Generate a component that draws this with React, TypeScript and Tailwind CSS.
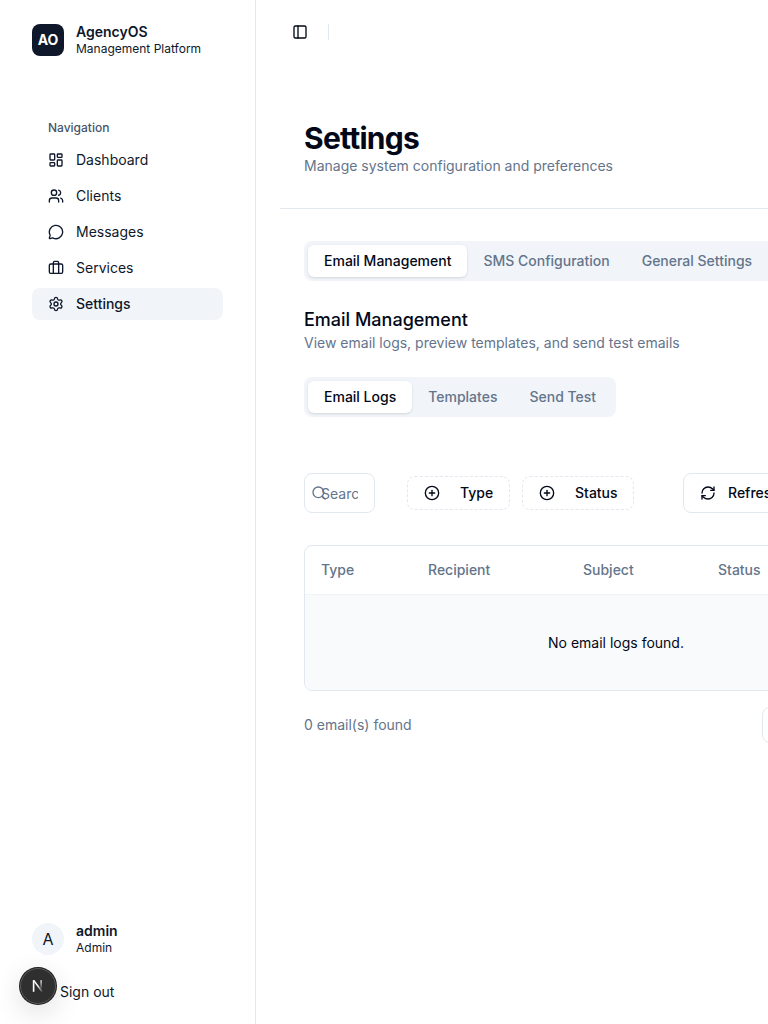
import React from "react";
import {
  Briefcase,
  CirclePlus,
  LayoutDashboard,
  LogOut,
  MessageCircle,
  PanelLeft,
  RefreshCw,
  Search,
  Settings,
  Users,
} from "lucide-react";

const navItems = [
  { label: "Dashboard", icon: LayoutDashboard },
  { label: "Clients", icon: Users },
  { label: "Messages", icon: MessageCircle },
  { label: "Services", icon: Briefcase },
  { label: "Settings", icon: Settings, active: true },
];

function Sidebar() {
  return (
    <aside className="flex h-full w-[256px] shrink-0 flex-col border-r border-[#e2e8f0] bg-white text-[#0f172a]">
      <div className="flex items-center gap-3 px-8 pt-6">
        <div className="flex h-8 w-8 items-center justify-center rounded-lg bg-[#0f172a] text-sm font-bold text-white">AO</div>
        <div className="flex h-8 flex-col">
          <span className="text-sm leading-4 font-semibold">AgencyOS</span>
          <span className="mt-px text-xs leading-4">Management Platform</span>
        </div>
      </div>
      <nav className="mt-[56px] pl-8 pr-8">
        <div className="flex h-8 items-center px-4 text-xs font-medium text-[#475569]">Navigation</div>
        <ul className="mt-0 flex flex-col gap-1">
          {navItems.map((item) => (
            <li key={item.label}>
              <a className={"flex h-8 items-center gap-3 rounded-lg px-4 text-sm " + (item.active ? "bg-[#f1f5f9] font-medium" : "")}>
                <item.icon size={16} />
                <span>{item.label}</span>
              </a>
            </li>
          ))}
        </ul>
      </nav>
      <div className="mt-auto px-8 pb-4">
        <div className="flex items-center gap-3">
          <div className="flex h-8 w-8 items-center justify-center rounded-full bg-[#f1f5f9] text-base">A</div>
          <div className="flex h-8 flex-col">
            <span className="text-sm leading-4 font-semibold">admin</span>
            <span className="mt-px text-xs leading-4">Admin</span>
          </div>
        </div>
        <button className="mt-[21px] flex h-8 w-full items-center gap-3 text-sm">
          <LogOut size={16} />
          <span>Sign out</span>
        </button>
      </div>
    </aside>
  );
}

function TabBar({ items, grow }: { items: string[]; grow?: boolean }) {
  return (
    <div className={"flex h-10 items-center rounded-lg bg-[#f1f5f9] p-1 " + (grow ? "w-[480px]" : "w-fit")}>
      {items.map((item, i) => (
        <button
          key={item}
          className={
            "flex h-8 shrink-0 items-center rounded-md px-4 text-sm font-medium whitespace-nowrap " +
            (i === 0 ? "bg-white text-[#020817] shadow-sm" : "text-[#64748b]")
          }
        >
          {item}
        </button>
      ))}
    </div>
  );
}

function FilterButton({ label, width }: { label: string; width: string }) {
  return (
    <button className={"flex h-[34px] shrink-0 items-center gap-5 rounded-lg border border-dashed border-[#e2e8f0] pl-4 text-sm font-medium text-[#020817] " + width}>
      <CirclePlus size={16} />
      {label}
    </button>
  );
}

export default function App() {
  return (
    <div className="flex h-screen w-screen overflow-hidden bg-white font-['Inter',sans-serif]">
      <Sidebar />
      <div className="flex w-[720px] shrink-0 flex-col">
        <header className="flex h-16 shrink-0 items-center gap-3 px-9">
          <PanelLeft size={16} className="text-[#020817]" />
          <div className="ml-[8px] h-4 w-px bg-[#e2e8f0]" />
        </header>
        <main className="p-6 pt-[8px]">
          <div className="border-b border-[#e2e8f0] px-6 pb-[32px] pt-[48px]">
            <h1 className="text-3xl leading-9 font-bold tracking-tight text-[#020817]">Settings</h1>
            <p className="text-sm leading-5 text-[#64748b]">Manage system configuration and preferences</p>
          </div>
          <div className="px-6 pt-8">
            <TabBar items={["Email Management", "SMS Configuration", "General Settings"]} grow />
            <h2 className="mt-[25px] text-lg leading-7 font-medium text-[#020817]">Email Management</h2>
            <p className="-mt-px text-sm leading-5 text-[#64748b]">View email logs, preview templates, and send test emails</p>
            <div className="mt-6">
              <TabBar items={["Email Logs", "Templates", "Send Test"]} />
            </div>
            <div className="mt-14 flex items-center">
              <div className="relative h-10 w-[71px] shrink-0 rounded-lg border border-[#e2e8f0]">
                <Search size={16} className="absolute left-1.5 top-[11px] text-[#64748b]" />
                <input
                  placeholder="Search"
                  className="h-full w-full rounded-lg bg-transparent pl-[16px] pr-4 text-sm outline-none placeholder:text-[#64748b]"
                />
              </div>
              <div className="ml-8 flex items-center gap-3">
                <FilterButton label="Type" width="w-[103px]" />
                <FilterButton label="Status" width="w-[112px]" />
              </div>
              <button className="ml-[49px] flex h-10 shrink-0 items-center gap-3 rounded-lg border border-[#e2e8f0] px-4 text-sm font-medium text-[#020817]">
                <RefreshCw size={16} />
                Refresh
              </button>
            </div>
            <div className="mt-8 overflow-hidden rounded-lg border border-[#e2e8f0]">
              <div className="flex h-[49px] items-center border-b border-[#f1f5f9] text-sm font-medium text-[#64748b]">
                <span className="w-[123px] shrink-0 pl-4">Type</span>
                <span className="w-[155px] shrink-0">Recipient</span>
                <span className="w-[135px] shrink-0">Subject</span>
                <span>Status</span>
              </div>
              <div className="flex h-[95px] items-center justify-center bg-[#f8fafc] text-sm text-[#020817]">No email logs found.</div>
            </div>
            <div className="mt-4 flex h-9 items-center justify-between">
              <span className="text-sm text-[#64748b]">0 email(s) found</span>
              <div className="flex items-center gap-2">
                <button aria-label="Previous page" className="h-9 w-[90px] rounded-lg border border-[#e2e8f0]" />
                <button aria-label="Next page" className="h-9 w-[68px] rounded-lg border border-[#e2e8f0]" />
              </div>
            </div>
          </div>
        </main>
      </div>
      {/* dev indicator */}
      <div className="fixed left-[20px] top-[968px] flex h-[36px] w-[36px] items-center justify-center rounded-full border border-[#5a5a5a] bg-[#2f2f2f] shadow-[0_0_0_1px_#1f1f1f,0_8px_28px_rgba(0,0,0,0.14)]">
        <svg width="16" height="16" viewBox="0 0 16 16" fill="none">
          <defs>
            <linearGradient id="nFade" x1="4" y1="3" x2="12" y2="14" gradientUnits="userSpaceOnUse">
              <stop offset="0.45" stopColor="white" />
              <stop offset="1" stopColor="white" stopOpacity="0.1" />
            </linearGradient>
            <linearGradient id="nStem" x1="11" y1="2" x2="11" y2="10" gradientUnits="userSpaceOnUse">
              <stop offset="0" stopColor="white" />
              <stop offset="1" stopColor="white" stopOpacity="0.2" />
            </linearGradient>
          </defs>
          <path d="M2.8 2.2h1.6v11.6H2.8z" fill="white" />
          <path d="M2.8 2.2h1.7l8.3 11-1.3 1z" fill="url(#nFade)" />
          <path d="M10.4 2.2h1.4v8h-1.4z" fill="url(#nStem)" />
        </svg>
      </div>
    </div>
  );
}
